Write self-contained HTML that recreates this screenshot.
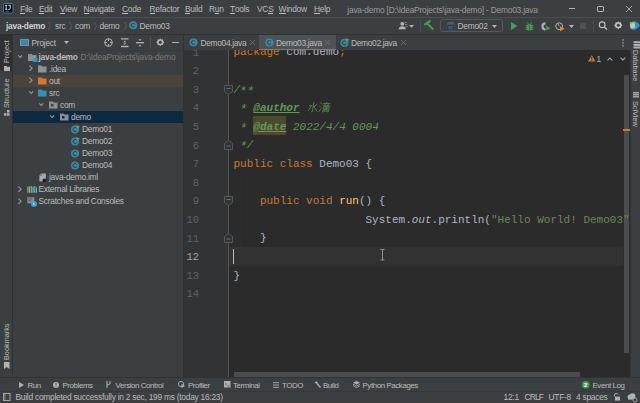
<!DOCTYPE html>
<html><head><meta charset="utf-8">
<style>
*{margin:0;padding:0;box-sizing:border-box}
html,body{width:640px;height:403px;overflow:hidden;background:#3C3F41}
body{position:relative;font-family:"Liberation Sans",sans-serif;color:#BBBBBB;font-size:7.7px}
.a{position:absolute}
.t{position:absolute;white-space:pre;line-height:12px;height:12px;font-size:8.4px;letter-spacing:-0.25px}
.tb{position:absolute;white-space:pre;line-height:12px;height:12px;font-size:7.9px;letter-spacing:-0.4px}
.m{position:absolute;white-space:pre;font-family:"Liberation Mono",monospace;font-size:11px;line-height:18.6px;height:18.6px}
.u{text-decoration:underline;text-decoration-thickness:0.6px;text-underline-offset:1px}
.mu{position:relative}.mu::after{content:"";position:absolute;left:0;right:0.3px;bottom:0px;height:0.8px;background:#BBBBBB}
svg{position:absolute;overflow:visible}
.st{display:inline-block;transform:translateY(1.2px) scale(1.15)}
</style></head><body>

<!-- ============ MENU BAR ============ -->
<div class="a" style="left:0;top:0;width:640px;height:17px;background:#3C3F41"></div>
<div class="a" style="left:0;top:17px;width:640px;height:1px;background:#4A4D4F"></div>
<!-- logo -->
<svg style="left:3px;top:3px" width="10.5" height="10.5">
  <rect x="0.5" y="0.5" width="9.5" height="9.5" rx="1.2" fill="#000810" stroke="#3F7EA6" stroke-width="1"/>
  <path d="M2.1 2.3h2.2M3.2 2.3v4M2.1 6.3h2.2" stroke="#F0F0F0" stroke-width="0.9"/>
  <path d="M5.3 2.3h2.5M7.2 2.3v3.3Q7.2 6.4 5.9 6.4H5.2" stroke="#F0F0F0" stroke-width="0.9" fill="none"/>
  <path d="M2.5 8.2h3.5" stroke="#9A9A9A" stroke-width="0.7"/>
</svg>
<div class="t" style="left:20px;top:3.2px"><span class="mu">F</span>ile</div>
<div class="t" style="left:39px;top:3.2px"><span class="mu">E</span>dit</div>
<div class="t" style="left:60px;top:3.2px"><span class="mu">V</span>iew</div>
<div class="t" style="left:83.5px;top:3.2px"><span class="mu">N</span>avigate</div>
<div class="t" style="left:122px;top:3.2px"><span class="mu">C</span>ode</div>
<div class="t" style="left:149.5px;top:3.2px"><span class="mu">R</span>efactor</div>
<div class="t" style="left:185px;top:3.2px"><span class="mu">B</span>uild</div>
<div class="t" style="left:209px;top:3.2px">R<span class="mu">u</span>n</div>
<div class="t" style="left:230px;top:3.2px"><span class="mu">T</span>ools</div>
<div class="t" style="left:257px;top:3.2px">VC<span class="mu">S</span></div>
<div class="t" style="left:278.5px;top:3.2px"><span class="mu">W</span>indow</div>
<div class="t" style="left:314px;top:3.2px"><span class="mu">H</span>elp</div>
<div class="t" style="left:347.3px;top:3.5px;color:#9A9A9A;letter-spacing:-0.22px">java-demo [D:\IdeaProjects\java-demo] - Demo03.java</div>
<!-- window controls -->
<div class="a" style="left:569px;top:8px;width:6px;height:1px;background:#B0B0B0"></div>
<div class="a" style="left:597px;top:5.5px;width:6.5px;height:6.5px;border:1px solid #B0B0B0;border-radius:1px"></div>
<svg style="left:626px;top:5.5px" width="6" height="6"><path d="M0 0L6 6M6 0L0 6" stroke="#B0B0B0" stroke-width="0.9"/></svg>

<!-- ============ NAV BAR ============ -->
<div class="a" style="left:0;top:34px;width:640px;height:1px;background:#2F3133"></div>
<div class="t" style="left:6px;top:19.5px;font-weight:700;color:#CFCFCF">java-demo</div>
<div class="t" style="left:55px;top:20px">src</div>
<div class="t" style="left:75px;top:20px">com</div>
<div class="t" style="left:99.5px;top:20px">demo</div>
<div class="t" style="left:139.5px;top:20px">Demo03</div>
<svg style="left:48px;top:22px" width="3" height="8"><path d="M0.5 0L2.5 4L0.5 8" stroke="#5E6062" fill="none" stroke-width="0.8"/></svg>
<svg style="left:69px;top:22px" width="3" height="8"><path d="M0.5 0L2.5 4L0.5 8" stroke="#5E6062" fill="none" stroke-width="0.8"/></svg>
<svg style="left:94px;top:22px" width="3" height="8"><path d="M0.5 0L2.5 4L0.5 8" stroke="#5E6062" fill="none" stroke-width="0.8"/></svg>
<svg style="left:123.5px;top:22px" width="3" height="8"><path d="M0.5 0L2.5 4L0.5 8" stroke="#5E6062" fill="none" stroke-width="0.8"/></svg>
<svg style="left:129px;top:20.8px" width="8.5" height="8.5"><circle cx="4.2" cy="4.2" r="4" fill="#3E86A0"/><path d="M5.7 3A1.9 1.9 0 1 0 5.7 5.4" stroke="#1D3F50" stroke-width="1" fill="none"/></svg>

<!-- nav toolbar right -->
<svg style="left:398px;top:21px" width="18" height="10">
  <circle cx="4.3" cy="2.8" r="1.9" fill="#B4B4B4"/><path d="M0.7 8.3 Q0.9 5.3 4.3 5.3 Q7.7 5.3 7.9 8.3Z" fill="#B4B4B4"/>
  <path d="M6.5 1.5 h2.5M7 3.5h2.5M7.5 5.5h2" stroke="#8E9193" stroke-width="0.8"/>
  <path d="M11 4h5l-2.5 2.8z" fill="#B4B4B4"/>
</svg>
<div class="a" style="left:419.5px;top:20px;width:1px;height:12px;background:#4A4D4F"></div>
<svg style="left:424px;top:20px" width="10" height="11">
  <path d="M1.2 4.4 L5.8 1.2" stroke="#499C54" stroke-width="2.2" stroke-linecap="round"/><path d="M3.3 3.6 L8.6 8.8" stroke="#499C54" stroke-width="2" stroke-linecap="round"/>
</svg>
<div class="a" style="left:440px;top:19.3px;width:62.5px;height:13.2px;border:1px solid #55585A;border-radius:2.5px;background:#3C3F41"></div>
<svg style="left:446px;top:21.5px" width="9" height="9"><path d="M1.5 0.6h6M1 1.9h7" stroke="#6A7176" stroke-width="0.8"/><rect x="0.8" y="2.8" width="7.4" height="5.6" fill="#2F353A" stroke="#50575C" stroke-width="0.6"/><rect x="2" y="4" width="5" height="3.4" fill="#35587A"/></svg>
<div class="t" style="left:457.5px;top:20px">Demo02</div>
<svg style="left:492px;top:24.5px" width="5" height="3"><path d="M0 0h5l-2.5 3z" fill="#B4B4B4"/></svg>
<svg style="left:511px;top:22px" width="7" height="8"><path d="M0 0L6.5 4L0 8Z" fill="#499C54"/></svg>
<svg style="left:525px;top:21.5px" width="9" height="9">
  <ellipse cx="4.5" cy="5.2" rx="2.9" ry="3.3" fill="#499C54"/>
  <path d="M0.8 3.6h7.4M0.6 5.6h7.8M0.8 7.6h7.4M2.6 0.6l0.9 1.6M6.4 0.6l-0.9 1.6" stroke="#499C54" stroke-width="0.9"/>
  <path d="M4.5 3v5" stroke="#3C3F41" stroke-width="0.5"/>
</svg>
<svg style="left:540.5px;top:21.8px" width="10" height="9">
  <path d="M4.5 0.3 A4.1 4.1 0 1 0 4.5 8.5 L4.5 6.3 A1.9 1.9 0 1 1 4.5 2.5Z" fill="#AFB1B3"/>
  <path d="M5 3 L4.5 4.5 L5.5 4.5Z" fill="#AFB1B3"/>
  <path d="M5.2 3.8 L9.6 6.2 L5.2 8.6Z" fill="#499C54"/>
</svg>
<svg style="left:554.5px;top:21.5px" width="10" height="9.5">
  <circle cx="4.2" cy="4.2" r="3.4" fill="none" stroke="#AFB1B3" stroke-width="1"/><path d="M4.2 4.2L3.4 2.2" stroke="#AFB1B3" stroke-width="0.9"/>
  <path d="M5 4.3 L9.6 6.8 L5 9.3Z" fill="#E0883A"/>
</svg>
<svg style="left:568.5px;top:25px" width="5" height="3"><path d="M0 0h5l-2.5 3z" fill="#B4B4B4"/></svg>
<div class="a" style="left:580px;top:22.6px;width:6px;height:6.8px;background:#4F5254"></div>
<div class="a" style="left:592.5px;top:20px;width:1px;height:12px;background:#4A4D4F"></div>
<svg style="left:597.5px;top:21px" width="10" height="10"><circle cx="4.2" cy="3.8" r="2.9" fill="none" stroke="#C4C4C4" stroke-width="1.1"/><path d="M6.3 5.9L9 8.5" stroke="#C4C4C4" stroke-width="1.3"/></svg>
<svg style="left:614px;top:21.4px" width="9" height="9">
  <path d="M4.3 0.3 L5.3 1.5 L7 1.3 L7.2 2.9 L8.5 4.2 L7.2 5.5 L7 7.1 L5.3 6.9 L4.3 8.2 L3.3 6.9 L1.6 7.1 L1.4 5.5 L0.1 4.2 L1.4 2.9 L1.6 1.3 L3.3 1.5Z" fill="#C0C0C0"/>
  <circle cx="4.3" cy="4.2" r="1.5" fill="#3C3F41"/>
</svg>
<svg style="left:629.3px;top:21px" width="11" height="9.5">
  <path d="M1 1.5 Q4 0 7 0.8 Q10 2 10.8 4.6 Q9 8 5.5 9 Q2.5 9.3 1.2 7 Q0.2 4 1 1.5Z" fill="#2D8FD5"/>
  <path d="M1.2 2 Q3.5 1.2 5.8 2 L6.3 6.5 Q4 8 1.8 7.3 Q0.8 4.5 1.2 2Z" fill="#B9CDA6"/>
  <circle cx="1.8" cy="2" r="1.1" fill="#E08A3C"/><path d="M3.5 0.6 Q5.5 0.3 7 1 L5.5 2.2Z" fill="#5DB55A"/>
</svg>

<!-- ============ LEFT STRIPE ============ -->
<div class="a" style="left:0;top:35px;width:12px;height:342px;background:#3C3F41"></div>
<div class="a" style="left:12px;top:35px;width:1px;height:342px;background:#323232"></div>
<div class="a" style="left:0;top:35px;width:12px;height:36px;background:#2E3032"></div>

<!-- ============ PROJECT PANEL ============ -->
<div class="a" style="left:13px;top:35px;width:170px;height:342px;background:#3C3F41"></div>
<div class="a" style="left:183px;top:35px;width:1px;height:342px;background:#323232"></div>
<!-- header -->
<div class="a" style="left:13px;top:50px;width:170px;height:1px;background:#37393B"></div>
<div class="a" style="left:20px;top:38.7px;width:8.8px;height:7.6px;border:1px solid #868B8F;border-top-width:1.6px;background:#3889B0"></div>
<div class="t" style="left:31.5px;top:36.5px">Project</div>
<svg style="left:64px;top:41px" width="5" height="3"><path d="M0 0h5l-2.5 3z" fill="#B4B4B4"/></svg>

<!-- tree rows -->
<div class="a" style="left:13px;top:75px;width:170px;height:12px;background:#4A453B"></div>
<div class="a" style="left:13px;top:111px;width:170px;height:12px;background:#0D293E"></div>


<!-- header icons -->
<svg style="left:104px;top:38px" width="9" height="9">
  <circle cx="4.5" cy="4.5" r="3.8" fill="none" stroke="#AFB1B3" stroke-width="1"/>
  <path d="M4.5 0.5v2.5M4.5 6v2.5M0.5 4.5h2.5M6 4.5h2.5" stroke="#AFB1B3" stroke-width="1"/>
</svg>
<svg style="left:120.5px;top:37.8px" width="8" height="9.5">
  <path d="M0 0.9h7.5M0 8.5h7.5" stroke="#AFB1B3" stroke-width="1.4"/>
  <path d="M2.3 4.2L3.75 2.6L5.2 4.2Z M2.3 5.3L3.75 6.9L5.2 5.3Z" fill="#AFB1B3"/>
</svg>
<svg style="left:136px;top:37.8px" width="8" height="9.5">
  <path d="M0 4.7h8" stroke="#AFB1B3" stroke-width="1.3"/>
  <path d="M2.5 1.3L4 3L5.5 1.3Z M2.5 8.2L4 6.5L5.5 8.2Z" fill="#AFB1B3"/>
</svg>
<div class="a" style="left:149.5px;top:37px;width:1px;height:11px;background:#4F5254"></div>
<svg style="left:155.7px;top:38.2px" width="9" height="9">
  <path d="M4.3 0.3 L5.3 1.5 L7 1.3 L7.2 2.9 L8.5 4.2 L7.2 5.5 L7 7.1 L5.3 6.9 L4.3 8.2 L3.3 6.9 L1.6 7.1 L1.4 5.5 L0.1 4.2 L1.4 2.9 L1.6 1.3 L3.3 1.5Z" fill="#AFB1B3"/>
  <circle cx="4.3" cy="4.2" r="1.5" fill="#3C3F41"/>
</svg>
<div class="a" style="left:171.5px;top:42px;width:7.5px;height:1.2px;background:#AFB1B3"></div>

<!-- tree -->
<svg style="left:17.5px;top:55px" width="5" height="3"><path d="M0.3 0.3L2.2 2.5L4.1 0.3" stroke="#9A9DA0" fill="none" stroke-width="1.05"/></svg>
<svg style="left:27.5px;top:52.5px" width="10" height="9">
  <path d="M0 1h3.5l1 1H8.5v6H0z" fill="#8A9297"/><rect x="5" y="5" width="4.5" height="4" fill="#3592C4"/>
</svg>
<div class="t" style="left:38.5px;top:51px;font-weight:700">java-demo</div>
<div class="t" style="left:80.5px;top:51px;color:#7A7A7A;letter-spacing:-0.15px">D:\IdeaProjects\java-demo</div>

<svg style="left:28.8px;top:65.1px" width="4" height="7"><path d="M0.5 0.6L3.1 3.2L0.5 5.8" stroke="#9A9DA0" fill="none" stroke-width="1.05"/></svg>
<svg style="left:38px;top:65px" width="9" height="8"><path d="M0 0.5h3.5l1 1H8.5v6H0z" fill="#8A9297"/></svg>
<div class="t" style="left:49px;top:63px">.idea</div>

<svg style="left:28.8px;top:77.1px" width="4" height="7"><path d="M0.5 0.6L3.1 3.2L0.5 5.8" stroke="#9A9DA0" fill="none" stroke-width="1.05"/></svg>
<svg style="left:38px;top:77px" width="9" height="8"><path d="M0 0.5h3.5l1 1H8.5v6H0z" fill="#D67633"/></svg>
<div class="t" style="left:49px;top:75px">out</div>

<svg style="left:28.5px;top:91px" width="5" height="3"><path d="M0.3 0.3L2.2 2.5L4.1 0.3" stroke="#9A9DA0" fill="none" stroke-width="1.05"/></svg>
<svg style="left:38px;top:89px" width="9" height="8"><path d="M0 0.5h3.5l1 1H8.5v6H0z" fill="#3A8DB3"/></svg>
<div class="t" style="left:49px;top:87px">src</div>

<svg style="left:39px;top:103px" width="5" height="3"><path d="M0.3 0.3L2.2 2.5L4.1 0.3" stroke="#9A9DA0" fill="none" stroke-width="1.05"/></svg>
<svg style="left:49px;top:101px" width="9" height="8"><path d="M0 0.5h3.5l1 1H8.5v6H0z" fill="#8A9297"/><rect x="2" y="3" width="2.5" height="2.5" fill="#3C3F41"/></svg>
<div class="t" style="left:60px;top:99px">com</div>

<svg style="left:50px;top:115px" width="5" height="3"><path d="M0.3 0.3L2.2 2.5L4.1 0.3" stroke="#9A9DA0" fill="none" stroke-width="1.05"/></svg>
<svg style="left:59.5px;top:113px" width="9" height="8"><path d="M0 0.5h3.5l1 1H8.5v6H0z" fill="#8A9297"/><rect x="2" y="3" width="2.5" height="2.5" fill="#0D293E"/></svg>
<div class="t" style="left:71px;top:111px">demo</div>

<svg style="left:71px;top:124.5px" width="9" height="9"><circle cx="4" cy="4.5" r="4" fill="#3E86A0"/><path d="M5.6 3.2A2 2 0 1 0 5.6 5.8" stroke="#1F3D4C" stroke-width="1" fill="none"/><path d="M5.5 0L9 1.8L5.5 3.6Z" fill="#59A869"/></svg>
<div class="t" style="left:82px;top:123px">Demo01</div>
<svg style="left:71px;top:136.5px" width="9" height="9"><circle cx="4" cy="4.5" r="4" fill="#3E86A0"/><path d="M5.6 3.2A2 2 0 1 0 5.6 5.8" stroke="#1F3D4C" stroke-width="1" fill="none"/><path d="M5.5 0L9 1.8L5.5 3.6Z" fill="#59A869"/></svg>
<div class="t" style="left:82px;top:135px">Demo02</div>
<svg style="left:71px;top:148.5px" width="9" height="9"><circle cx="4" cy="4.5" r="4" fill="#3E86A0"/><path d="M5.6 3.2A2 2 0 1 0 5.6 5.8" stroke="#1F3D4C" stroke-width="1" fill="none"/></svg>
<div class="t" style="left:82px;top:147px">Demo03</div>
<svg style="left:71px;top:160.5px" width="9" height="9"><circle cx="4" cy="4.5" r="4" fill="#3E86A0"/><path d="M5.6 3.2A2 2 0 1 0 5.6 5.8" stroke="#1F3D4C" stroke-width="1" fill="none"/></svg>
<div class="t" style="left:82px;top:159px">Demo04</div>

<svg style="left:39.3px;top:172.8px" width="8" height="9.5"><path d="M0.4 2.2 L2.2 0.4 H6.8 V6 H3.6 V8.3 H0.4Z" fill="#A3ACB2"/><path d="M0.8 2.4h1.6v-1.6" stroke="#3C3F41" stroke-width="0.5" fill="none"/><rect x="4" y="5.8" width="3.2" height="3.4" fill="#1F2021"/></svg>
<div class="t" style="left:49px;top:171px">java-demo.iml</div>

<svg style="left:17.8px;top:185.6px" width="4" height="7"><path d="M0.5 0.6L3.1 3.2L0.5 5.8" stroke="#9A9DA0" fill="none" stroke-width="1.05"/></svg>
<svg style="left:27px;top:185.5px" width="10" height="7"><rect x="0.3" y="0.5" width="1.2" height="6.3" fill="#9AA7B0"/><rect x="2" y="0.5" width="1.2" height="6.3" fill="#9AA7B0"/><rect x="3.7" y="0" width="1.3" height="6.8" fill="#62B543"/><rect x="5.5" y="0.8" width="1.2" height="6" fill="#9AA7B0"/><rect x="7.2" y="0" width="1.3" height="6.8" fill="#40B6E0"/><rect x="9" y="1.5" width="0.9" height="5.3" fill="#9AA7B0"/></svg>
<div class="t" style="left:38.5px;top:183px">External Libraries</div>

<svg style="left:17.8px;top:197.6px" width="4" height="7"><path d="M0.5 0.6L3.1 3.2L0.5 5.8" stroke="#9A9DA0" fill="none" stroke-width="1.05"/></svg>
<svg style="left:27.3px;top:196.5px" width="10" height="10"><rect x="0.3" y="0.3" width="7" height="6" fill="#8E9194"/><path d="M1.3 2h4M1.3 3.8h3" stroke="#3C3F41" stroke-width="0.7"/><circle cx="7" cy="7" r="3" fill="#389FD6"/><path d="M6.6 5.5v1.9h1.6" stroke="#E8F2F8" stroke-width="0.7" fill="none"/></svg>
<div class="t" style="left:38.5px;top:195px">Scratches and Consoles</div>


<!-- ============ LEFT STRIPE labels ============ -->
<div class="a" style="left:1.5px;top:62.5px;width:23px;height:10px;transform-origin:0 0;transform:rotate(-90deg);font-size:7.3px;line-height:10px;color:#BBBBBB;white-space:pre">Project</div>
<svg style="left:3.5px;top:65.5px" width="6" height="5"><path d="M0 0h2.5l0.7 0.8H6V5H0z" fill="#AFB1B3"/></svg>
<div class="a" style="left:1.5px;top:107.5px;width:31px;height:10px;transform-origin:0 0;transform:rotate(-90deg);font-size:7.3px;line-height:10px;color:#BBBBBB;white-space:pre">Structure</div>
<svg style="left:3.5px;top:110px" width="6" height="6"><rect x="3" y="0" width="2.5" height="2.5" fill="#AFB1B3"/><rect x="0" y="3.2" width="2.5" height="2.5" fill="#AFB1B3"/><rect x="3" y="3.2" width="2.5" height="2.5" fill="#AFB1B3"/></svg>
<div class="a" style="left:1.5px;top:359.5px;width:36px;height:10px;transform-origin:0 0;transform:rotate(-90deg);font-size:7.3px;line-height:10px;color:#BBBBBB;white-space:pre">Bookmarks</div>
<svg style="left:3.5px;top:362px" width="6" height="7"><path d="M0 0h5.5v7L2.75 5L0 7z" fill="#AFB1B3"/></svg>

<!-- ============ EDITOR ============ -->
<div class="a" style="left:184px;top:35px;width:446px;height:15px;background:#3C3F41"></div>
<!-- tabs -->
<div class="a" style="left:259px;top:35px;width:76.5px;height:15px;background:#4E5254"></div>
<div class="a" style="left:259px;top:48.5px;width:76.5px;height:1.5px;background:#4A88C7"></div>
<svg style="left:188.7px;top:38px" width="9" height="9"><circle cx="4.5" cy="4.5" r="4.1" fill="#3E86A0"/><path d="M6 3.2A2 2 0 1 0 6 5.8" stroke="#1F3D4C" stroke-width="1" fill="none"/></svg>
<div class="t" style="left:200.5px;top:36.5px;letter-spacing:-0.32px">Demo04.java</div>
<svg style="left:250px;top:40px" width="5" height="5"><path d="M0 0L5 5M5 0L0 5" stroke="#6E7173" stroke-width="0.8"/></svg>
<svg style="left:264.5px;top:38px" width="9" height="9"><circle cx="4.5" cy="4.5" r="4.1" fill="#3E86A0"/><path d="M6 3.2A2 2 0 1 0 6 5.8" stroke="#1F3D4C" stroke-width="1" fill="none"/></svg>
<div class="t" style="left:276px;top:36.5px;letter-spacing:-0.32px">Demo03.java</div>
<svg style="left:325px;top:40px" width="5" height="5"><path d="M0 0L5 5M5 0L0 5" stroke="#6E7173" stroke-width="0.8"/></svg>
<svg style="left:339.5px;top:38px" width="10" height="9"><circle cx="4.5" cy="4.8" r="4.1" fill="#3E86A0"/><path d="M6 3.5A2 2 0 1 0 6 6.1" stroke="#1F3D4C" stroke-width="1" fill="none"/><path d="M6 0L9.5 1.8L6 3.6Z" fill="#59A869"/></svg>
<div class="t" style="left:351px;top:36.5px;letter-spacing:-0.32px">Demo02.java</div>
<svg style="left:401px;top:40px" width="5" height="5"><path d="M0 0L5 5M5 0L0 5" stroke="#6E7173" stroke-width="0.8"/></svg>
<svg style="left:621.5px;top:39px" width="2" height="8"><circle cx="1" cy="1" r="0.8" fill="#AFB1B3"/><circle cx="1" cy="4" r="0.8" fill="#AFB1B3"/><circle cx="1" cy="7" r="0.8" fill="#AFB1B3"/></svg>

<!-- gutter + editor bg -->
<div class="a" style="left:184px;top:50px;width:44px;height:327px;background:#313335"></div>
<div class="a" style="left:228px;top:50px;width:402px;height:327px;background:#2B2B2B"></div>
<div class="a" style="left:228px;top:50px;width:1px;height:327px;background:#555555"></div>
<!-- current line -->
<div class="a" style="left:229px;top:246.5px;width:394px;height:19px;background:#323232"></div>

<!-- line numbers -->
<div class="a" style="left:184px;top:50px;width:44px;height:327px;overflow:hidden">
<div class="a" style="left:0;top:-6.3px;width:15px;font-family:'Liberation Mono';font-size:10.5px;line-height:18.6px;color:#606366;text-align:right;white-space:pre">1
2
3
4
5
6
7
8
9
10
11
<span style="color:#A4A3A3">12</span>
13
14</div>
</div>

<!-- scrollbar -->
<div class="a" style="left:624px;top:75px;width:5.2px;height:278.3px;background:#4A4C4E"></div>
<div class="a" style="left:622.5px;top:129px;width:7px;height:1.5px;background:#BE7E3E"></div>
<div class="a" style="left:234px;top:372px;width:346.3px;height:4.7px;background:#4A4C4E"></div>
<!-- code -->
<div class="a" style="left:253px;top:116.3px;width:33.2px;height:18.6px;background:#4B4A31"></div>
<div class="a" style="left:228px;top:50px;width:402px;height:327px;overflow:hidden">
<div class="a" style="left:5.5px;top:-6.6px;font-family:'Liberation Mono';font-size:11px;line-height:18.6px;color:#A9B7C6;white-space:pre"><span style="color:#CC7832">package</span> com.demo<span style="color:#CC7832">;</span>

<span style="color:#629755;font-style:italic">/<span class="st">**</span>
 <span class="st">*</span> <b class="u">@author</b>
 <span class="st">*</span> <b class="u">@date</b> 2022/4/4 0004
 <span class="st">*</span>/</span>
<span style="color:#CC7832">public class</span> Demo03 {

    <span style="color:#CC7832">public void</span> <span style="color:#FFC66D">run</span>() {
                    System.<i>out</i>.println(<span style="color:#6A8759">"Hello World! Demo03"</span>
    }

}
</div>
</div>
<!-- CJK glyphs drawn -->
<svg style="left:306.5px;top:101.8px;transform:skewX(-9deg);transform-origin:0 100%" width="24" height="11">
 <g stroke="#629755" stroke-width="0.7" fill="none" stroke-linecap="round">
  <path d="M5.2 0.5V9.6Q5.2 10.4 4.2 9.8"/>
  <path d="M1.2 3.6H3.6L0.8 8.6"/>
  <path d="M8.8 2.2L6.2 4.6"/>
  <path d="M5.6 4.2L9.8 9.4"/>
  <path d="M12.2 1L13.2 2M11.8 4.2L12.8 5.1M11.8 9.4L13.3 6.6"/>
  <path d="M18.2 0.3V1.3M15 1.6H21.6M16.6 2.2L17.1 3.6M20 2.2L19.5 3.6M15 3.9H21.6"/>
  <path d="M15.6 10.2V4.8H21.2V9.6Q21.2 10.3 20.3 10"/>
  <path d="M17 6.3H19.8M18.4 5V7.6M17 7.7H19.8V9.2H17Z"/>
 </g>
</svg>
<!-- indent guide -->
<div class="a" style="left:240px;top:174px;width:0;height:92px;border-left:1px dotted #313131"></div>
<!-- caret -->
<div class="a" style="left:233px;top:249px;width:1.2px;height:14.5px;background:#BBBBBB"></div>
<!-- mouse I-beam -->
<svg style="left:379.5px;top:249px" width="5" height="11.5"><path d="M0.5 0.5h4M2.5 0.5v10.5M0.5 11h4" stroke="#9A9A9A" stroke-width="0.9"/></svg>

<!-- fold markers -->
<svg style="left:224px;top:84.5px" width="9" height="10"><path d="M0.5 0.5h8v6l-4 3l-4-3z" fill="#313335" stroke="#5A5D5F" stroke-width="0.9"/><path d="M2.5 3.5h4" stroke="#8A8D90" stroke-width="0.7"/></svg>
<svg style="left:224px;top:139.5px" width="9" height="10"><path d="M0.5 9.5h8v-6l-4-3l-4 3z" fill="#313335" stroke="#5A5D5F" stroke-width="0.9"/><path d="M2.5 6h4" stroke="#8A8D90" stroke-width="0.7"/></svg>
<svg style="left:224px;top:195.5px" width="9" height="10"><path d="M0.5 0.5h8v6l-4 3l-4-3z" fill="#313335" stroke="#5A5D5F" stroke-width="0.9"/><path d="M2.5 3.5h4" stroke="#8A8D90" stroke-width="0.7"/></svg>
<svg style="left:224px;top:232.5px" width="9" height="10"><path d="M0.5 9.5h8v-6l-4-3l-4 3z" fill="#313335" stroke="#5A5D5F" stroke-width="0.9"/><path d="M2.5 6h4" stroke="#8A8D90" stroke-width="0.7"/></svg>

<!-- warnings -->
<svg style="left:587.6px;top:55.2px" width="8" height="7"><path d="M3.8 0L7.5 6.6H0Z" fill="#D07B36"/><path d="M3.75 1.8v2.6M3.75 5.0v0.9" stroke="#2B2B2B" stroke-width="1"/></svg>
<div class="t" style="left:596.3px;top:52.8px;color:#9FB0C0;font-size:9px;letter-spacing:0">1</div>
<svg style="left:607.3px;top:56.5px" width="6" height="4"><path d="M0.5 3.3L2.9 1L5.3 3.3" stroke="#A5A8AA" fill="none" stroke-width="1.1"/></svg>
<svg style="left:620px;top:56.8px" width="6" height="4"><path d="M0.5 0.7L2.9 3L5.3 0.7" stroke="#A5A8AA" fill="none" stroke-width="1.1"/></svg>

<!-- ============ RIGHT STRIPE ============ -->
<div class="a" style="left:630px;top:35px;width:10px;height:342px;background:#3C3F41"></div>
<div class="a" style="left:630px;top:50px;width:0.6px;height:327px;background:#333537"></div>
<svg style="left:632.5px;top:40.5px" width="8" height="8"><rect x="0.3" y="0.3" width="7.5" height="2" rx="0.8" fill="#AFB1B3"/><rect x="0.3" y="2.9" width="7.5" height="2" rx="0.8" fill="#AFB1B3"/><rect x="0.3" y="5.5" width="7.5" height="2" rx="0.8" fill="#AFB1B3"/></svg>
<div class="a" style="left:640px;top:50px;width:31px;height:10px;transform-origin:0 0;transform:rotate(90deg);font-size:7.3px;line-height:10px;color:#BBBBBB;white-space:pre">Database</div>
<svg style="left:632.5px;top:92px" width="6" height="6"><path d="M0 0.5h6M0 2.5h6M0 4.5h6M1 0v6M3 0v6M5 0v6" stroke="#AFB1B3" stroke-width="0.9"/></svg>
<div class="a" style="left:640px;top:101px;width:31px;height:10px;transform-origin:0 0;transform:rotate(90deg);font-size:7.3px;line-height:10px;color:#BBBBBB;white-space:pre">SciView</div>

<!-- ============ BOTTOM TOOL BAR ============ -->
<div class="a" style="left:0;top:377px;width:640px;height:1px;background:#323232"></div>
<div class="a" style="left:0;top:378px;width:640px;height:25px;background:#3C3F41"></div>
<div class="a" style="left:0;top:390.5px;width:640px;height:1px;background:#36393B"></div>
<svg style="left:18.5px;top:381.5px" width="5" height="6"><path d="M0 0L5 3L0 6Z" fill="#AFB1B3"/></svg>
<div class="tb" style="left:27.5px;top:379.5px">Run</div>
<svg style="left:53px;top:381.5px" width="6" height="6"><circle cx="3" cy="3" r="3" fill="#AFB1B3"/><path d="M3 1.2v2M3 4.2v0.8" stroke="#3C3F41" stroke-width="0.9"/></svg>
<div class="tb" style="left:62.5px;top:379.5px">Problems</div>
<svg style="left:106px;top:381px" width="5" height="7"><path d="M1 0v7M1 5Q1 3 4 3V0" stroke="#AFB1B3" stroke-width="1" fill="none"/></svg>
<div class="tb" style="left:115.5px;top:379.5px">Version Control</div>
<svg style="left:178px;top:381px" width="7" height="7"><circle cx="3" cy="3" r="2.6" fill="none" stroke="#AFB1B3" stroke-width="0.9"/><path d="M3.5 3L7 5L3.5 7Z" fill="#AFB1B3"/></svg>
<div class="tb" style="left:188px;top:379.5px">Profiler</div>
<svg style="left:223.5px;top:381px" width="7" height="7"><rect x="0" y="0" width="6.5" height="6.5" fill="#AFB1B3"/><path d="M1.3 2l1.3 1.2L1.3 4.4M3.3 5h2" stroke="#3C3F41" stroke-width="0.7" fill="none"/></svg>
<div class="tb" style="left:233px;top:379.5px">Terminal</div>
<svg style="left:273px;top:381.5px" width="6" height="6"><path d="M0 0.7h6M0 3h6M0 5.3h6" stroke="#AFB1B3" stroke-width="0.9"/></svg>
<div class="tb" style="left:282px;top:379.5px">TODO</div>
<svg style="left:313.5px;top:381px" width="7" height="7"><path d="M0.5 1.5L2.5 0.3L3.8 1.2L2 2.6Z" fill="#AFB1B3"/><path d="M2.5 2L6.5 6.5" stroke="#AFB1B3" stroke-width="1.3"/></svg>
<div class="tb" style="left:323px;top:379.5px">Build</div>
<svg style="left:352.5px;top:381px" width="7" height="7"><path d="M3.5 0L7 1.8L3.5 3.6L0 1.8Z" fill="#AFB1B3"/><path d="M0 3.2L3.5 5L7 3.2M0 4.8L3.5 6.6L7 4.8" stroke="#AFB1B3" stroke-width="0.8" fill="none"/></svg>
<div class="tb" style="left:362.5px;top:379.5px">Python Packages</div>
<svg style="left:582px;top:381px" width="7.5" height="7.5"><circle cx="3.75" cy="3.75" r="3.75" fill="#499C54"/><text x="3.75" y="6" font-family="Liberation Sans" font-size="6" font-weight="700" fill="#fff" text-anchor="middle">2</text></svg>
<div class="tb" style="left:592.5px;top:379.5px">Event Log</div>

<!-- ============ STATUS BAR ============ -->
<svg style="left:3px;top:393px" width="8" height="8"><rect x="0.5" y="0.5" width="6.5" height="7" fill="none" stroke="#AFB1B3" stroke-width="0.9"/><path d="M2 0.5v7" stroke="#AFB1B3" stroke-width="0.7"/></svg>
<div class="t" style="left:15.5px;top:391px">Build completed successfully in 2 sec, 199 ms (today 16:23)</div>
<div class="t" style="left:503.5px;top:391px">12:1</div>
<div class="t" style="left:524.5px;top:391px;letter-spacing:-0.8px">CRLF</div>
<div class="t" style="left:548.5px;top:391px">UTF-8</div>
<div class="t" style="left:576px;top:391px">4 spaces</div>
<svg style="left:613px;top:393px" width="7" height="8"><path d="M1.5 3.5V2A1.8 1.8 0 0 1 5 1.6" stroke="#AFB1B3" stroke-width="0.9" fill="none"/><rect x="2" y="3.6" width="5" height="4" fill="#AFB1B3"/></svg>
<svg style="left:627px;top:392.5px" width="10" height="9"><circle cx="3" cy="4" r="2.5" fill="#AFB1B3"/><circle cx="5.5" cy="3" r="2.8" fill="#AFB1B3"/><rect x="1" y="4" width="7.5" height="2.5" fill="#AFB1B3"/><circle cx="8" cy="7" r="2" fill="#3C3F41" stroke="#AFB1B3" stroke-width="0.8"/></svg>

</body></html>
